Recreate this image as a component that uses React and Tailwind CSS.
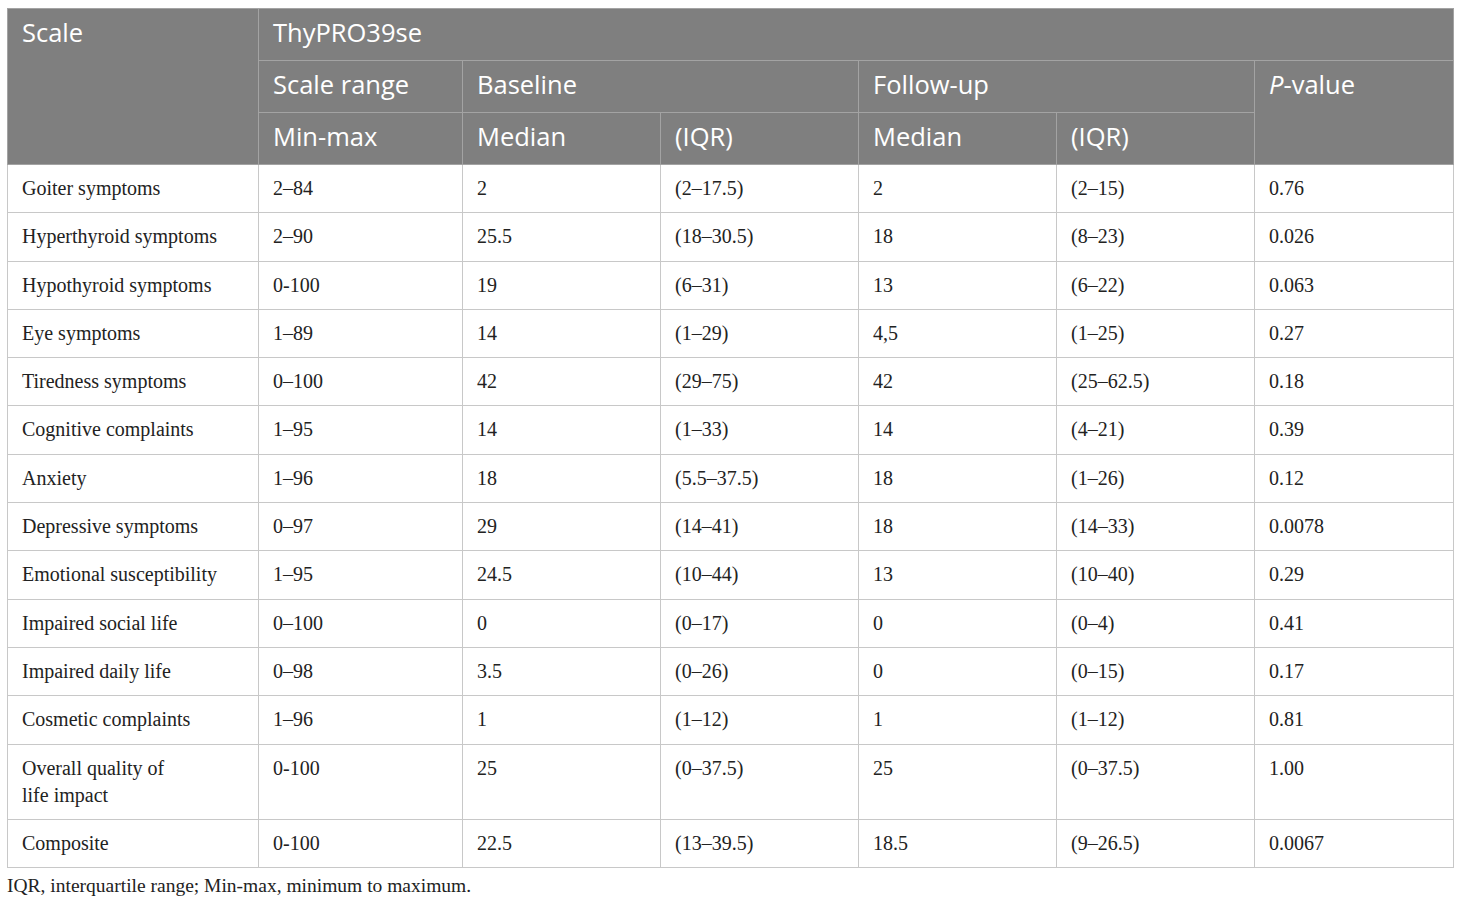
const rows = [
  ["Goiter symptoms", "2–84", "2", "(2–17.5)", "2", "(2–15)", "0.76"],
  ["Hyperthyroid symptoms", "2–90", "25.5", "(18–30.5)", "18", "(8–23)", "0.026"],
  ["Hypothyroid symptoms", "0-100", "19", "(6–31)", "13", "(6–22)", "0.063"],
  ["Eye symptoms", "1–89", "14", "(1–29)", "4,5", "(1–25)", "0.27"],
  ["Tiredness symptoms", "0–100", "42", "(29–75)", "42", "(25–62.5)", "0.18"],
  ["Cognitive complaints", "1–95", "14", "(1–33)", "14", "(4–21)", "0.39"],
  ["Anxiety", "1–96", "18", "(5.5–37.5)", "18", "(1–26)", "0.12"],
  ["Depressive symptoms", "0–97", "29", "(14–41)", "18", "(14–33)", "0.0078"],
  ["Emotional susceptibility", "1–95", "24.5", "(10–44)", "13", "(10–40)", "0.29"],
  ["Impaired social life", "0–100", "0", "(0–17)", "0", "(0–4)", "0.41"],
  ["Impaired daily life", "0–98", "3.5", "(0–26)", "0", "(0–15)", "0.17"],
  ["Cosmetic complaints", "1–96", "1", "(1–12)", "1", "(1–12)", "0.81"],
  [<>Overall quality of<br />life impact</>, "0-100", "25", "(0–37.5)", "25", "(0–37.5)", "1.00"],
  ["Composite", "0-100", "22.5", "(13–39.5)", "18.5", "(9–26.5)", "0.0067"],
];

function Th({ children, ...props }) {
  return (
    <th
      {...props}
      className="border border-[#a3a3a3] px-[14px] pt-[8px] pb-[12px] text-left align-top font-normal leading-[31px]"
    >
      {children}
    </th>
  );
}

export default function App() {
  return (
    <div className="bg-white min-h-[905px] pt-[8px] pl-[7px]">
      <table className="border-collapse w-[1446px] table-fixed">
        <colgroup>
          <col className="w-[251px]" />
          <col className="w-[204px]" />
          <col className="w-[198px]" />
          <col className="w-[198px]" />
          <col className="w-[198px]" />
          <col className="w-[198px]" />
          <col className="w-[199px]" />
        </colgroup>
        <thead className="bg-[#7f7f7f] text-white text-[25.5px] font-['Open_Sans',sans-serif]">
          <tr>
            <Th rowSpan={3}>Scale</Th>
            <Th colSpan={6}>ThyPRO39se</Th>
          </tr>
          <tr>
            <Th>Scale range</Th>
            <Th colSpan={2}>Baseline</Th>
            <Th colSpan={2}>Follow-up</Th>
            <Th rowSpan={2}>
              <i>P</i>-value
            </Th>
          </tr>
          <tr>
            <Th>Min-max</Th>
            <Th>Median</Th>
            <Th>(IQR)</Th>
            <Th>Median</Th>
            <Th>(IQR)</Th>
          </tr>
        </thead>
        <tbody className="text-[20px] text-[#222] font-['Liberation_Serif',serif]">
          {rows.map((r, i) => (
            <tr key={i}>
              {r.map((c, j) => (
                <td
                  key={j}
                  className="border border-[#c8c8c8] px-[14px] py-[10px] align-top leading-[27.3px]"
                >
                  {c}
                </td>
              ))}
            </tr>
          ))}
        </tbody>
      </table>
      <p className="mt-[4px] text-[19.5px] text-[#222] leading-[28px] font-['Liberation_Serif',serif]">
        IQR, interquartile range; Min-max, minimum to maximum.
      </p>
    </div>
  );
}
